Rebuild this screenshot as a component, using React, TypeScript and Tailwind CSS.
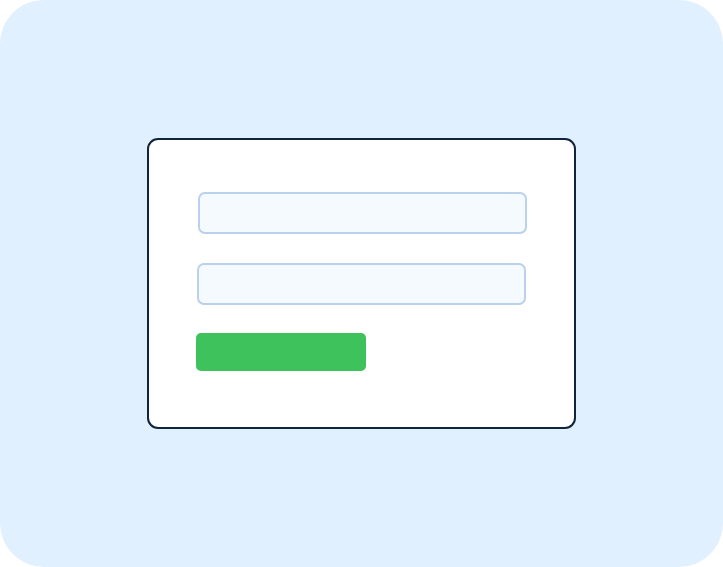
export default function App() {
  return (
    <div className="w-[723px] h-[567px] bg-white">
      <div className="w-[723px] h-[567px] rounded-[44px] bg-[#e0f0fe] flex items-center justify-center">
        <div className="w-[429px] h-[291px] bg-white border-[2.5px] border-[#10243d] rounded-[11px] flex flex-col pl-[47.5px] pt-[51.5px]">
          <div className="ml-[1px] w-[329px] h-[42px] rounded-[7px] border-2 border-[#b9d1ec] bg-[#f5faff]" />
          <div className="mt-[29px] w-[329px] h-[42px] rounded-[7px] border-2 border-[#b9d1ec] bg-[#f5faff]" />
          <div className="mt-[28px] -ml-[1px] w-[170px] h-[38px] rounded-[5px] bg-[#3ec25b]" />
        </div>
      </div>
    </div>
  );
}
